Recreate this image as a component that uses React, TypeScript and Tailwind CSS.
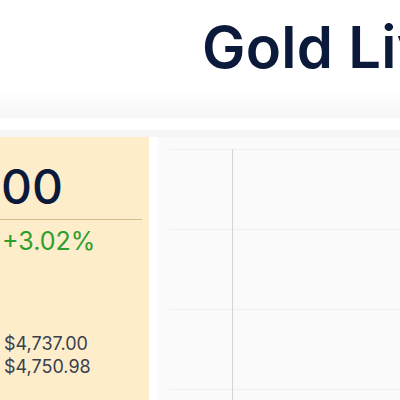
import React from 'react'

const gridRows = [0, 1, 2]

export default function App() {
  return (
    <div className="w-[400px] h-[400px] overflow-hidden bg-white" style={{ fontFamily: 'Inter, "Noto Sans", sans-serif' }}>
      {/* Header */}
      <div className="h-[118px] bg-gradient-to-b from-white from-[75%] to-[#f7f7f7] pl-[202px] pt-[12px] whitespace-nowrap overflow-hidden">
        <h1 className="text-[58px] font-semibold leading-[70px] tracking-[0.3px] text-[#0b1a3a]">Gold Live Price</h1>
      </div>
      <div className="h-[12px] bg-white" />
      <div className="h-[7px] bg-[#f5f5f5]" />

      <div className="flex h-[263px]">
        {/* Price card */}
        <div className="w-[149px] shrink-0 bg-[#fdedcb] flex flex-col">
          <div className="pt-[23px] pl-[1px] text-[48px] font-medium leading-[54px] text-[#0b1a3a]">00</div>
          <div className="mt-[5px] mr-[7px] h-px bg-[#d4b98c]" />
          <div className="mt-[6px] pl-[2px] text-[25px] leading-[30px] text-[#2e9e2e]">+3.02%</div>
          <div className="mt-[79px] pl-[4px] flex flex-col gap-[5px] text-[18px] leading-[18px] text-[#3a3f4c]">
            <span>$4,737.00</span>
            <span>$4,750.98</span>
          </div>
        </div>

        <div className="w-[9px] shrink-0 bg-white" />

        {/* Chart panel */}
        <div className="flex-1 bg-[#fafafa] pt-[12px] pl-[11px]">
          <div className="relative h-full">
            <div className="flex flex-col">
              {gridRows.map((r) => (
                <div key={r} className="h-[80px] border-t border-[#f0f0f0]" />
              ))}
              <div className="border-t border-[#f0f0f0]" />
            </div>
            <div className="absolute left-[63px] top-0 bottom-0 w-px bg-[#d4d4d4]" />
          </div>
        </div>
      </div>
    </div>
  )
}
